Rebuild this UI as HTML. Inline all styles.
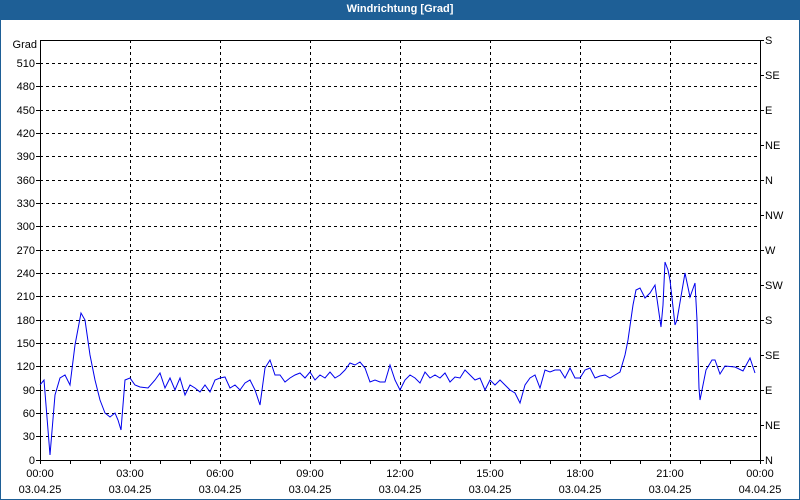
<!DOCTYPE html>
<html><head><style>
html,body{margin:0;padding:0;width:800px;height:500px;overflow:hidden;background:#fff}
.frame{position:absolute;left:0;top:0;width:798px;height:498px;border:1px solid #1e5f96}
.title{position:absolute;left:0;top:0;width:800px;height:20px;background:#1e5f96;color:#fff;font:bold 11px "Liberation Sans",sans-serif;text-align:center;line-height:19px}
svg{position:absolute;left:0;top:0}
text{font-family:"Liberation Sans",sans-serif;font-size:11px;fill:#000}
</style></head><body>
<div class="frame"></div>
<div class="title">Windrichtung [Grad]</div>
<svg width="800" height="500">
<g stroke="#000" stroke-width="1" stroke-dasharray="3,3" shape-rendering="crispEdges">
<line x1="40" x2="760" y1="63.5" y2="63.5"/><line x1="40" x2="760" y1="86.5" y2="86.5"/><line x1="40" x2="760" y1="110.5" y2="110.5"/><line x1="40" x2="760" y1="133.5" y2="133.5"/><line x1="40" x2="760" y1="156.5" y2="156.5"/><line x1="40" x2="760" y1="180.5" y2="180.5"/><line x1="40" x2="760" y1="203.5" y2="203.5"/><line x1="40" x2="760" y1="226.5" y2="226.5"/><line x1="40" x2="760" y1="250.5" y2="250.5"/><line x1="40" x2="760" y1="273.5" y2="273.5"/><line x1="40" x2="760" y1="296.5" y2="296.5"/><line x1="40" x2="760" y1="320.5" y2="320.5"/><line x1="40" x2="760" y1="343.5" y2="343.5"/><line x1="40" x2="760" y1="366.5" y2="366.5"/><line x1="40" x2="760" y1="390.5" y2="390.5"/><line x1="40" x2="760" y1="413.5" y2="413.5"/><line x1="40" x2="760" y1="436.5" y2="436.5"/>
<line y1="40" y2="460" x1="130.5" x2="130.5"/><line y1="40" y2="460" x1="220.5" x2="220.5"/><line y1="40" y2="460" x1="310.5" x2="310.5"/><line y1="40" y2="460" x1="400.5" x2="400.5"/><line y1="40" y2="460" x1="490.5" x2="490.5"/><line y1="40" y2="460" x1="580.5" x2="580.5"/><line y1="40" y2="460" x1="670.5" x2="670.5"/>
</g>
<g stroke="#000" stroke-width="1" shape-rendering="crispEdges">
<line x1="40.5" y1="40" x2="40.5" y2="460"/><line x1="760.5" y1="40" x2="760.5" y2="460"/><line x1="40" y1="40.5" x2="761" y2="40.5"/><line x1="40" y1="460.5" x2="761" y2="460.5"/>
<path d="M70.5 460v4M100.5 460v4M130.5 460v4M160.5 460v4M190.5 460v4M220.5 460v4M250.5 460v4M280.5 460v4M310.5 460v4M340.5 460v4M370.5 460v4M400.5 460v4M430.5 460v4M460.5 460v4M490.5 460v4M520.5 460v4M550.5 460v4M580.5 460v4M610.5 460v4M640.5 460v4M670.5 460v4M700.5 460v4M730.5 460v4M760.5 460v4M40.5 460v4"/>
<path d="M36 63.5h4M36 86.5h4M36 110.5h4M36 133.5h4M36 156.5h4M36 180.5h4M36 203.5h4M36 226.5h4M36 250.5h4M36 273.5h4M36 296.5h4M36 320.5h4M36 343.5h4M36 366.5h4M36 390.5h4M36 413.5h4M36 436.5h4M36 460.5h4"/>
<path d="M760 40.5h4M760 75.5h4M760 110.5h4M760 145.5h4M760 180.5h4M760 215.5h4M760 250.5h4M760 285.5h4M760 320.5h4M760 355.5h4M760 390.5h4M760 425.5h4M760 460.5h4"/>
</g>
<g text-anchor="end">
<text x="37" y="48">Grad</text>
<text x="35" y="67">510</text><text x="35" y="90">480</text><text x="35" y="114">450</text><text x="35" y="137">420</text><text x="35" y="160">390</text><text x="35" y="184">360</text><text x="35" y="207">330</text><text x="35" y="230">300</text><text x="35" y="254">270</text><text x="35" y="277">240</text><text x="35" y="300">210</text><text x="35" y="324">180</text><text x="35" y="347">150</text><text x="35" y="370">120</text><text x="35" y="394">90</text><text x="35" y="417">60</text><text x="35" y="440">30</text><text x="35" y="464">0</text>
</g>
<g>
<text x="765" y="44">S</text><text x="765" y="79">SE</text><text x="765" y="114">E</text><text x="765" y="149">NE</text><text x="765" y="184">N</text><text x="765" y="219">NW</text><text x="765" y="254">W</text><text x="765" y="289">SW</text><text x="765" y="324">S</text><text x="765" y="359">SE</text><text x="765" y="394">E</text><text x="765" y="429">NE</text><text x="765" y="464">N</text>
</g>
<g text-anchor="middle">
<text x="40" y="477">00:00</text><text x="130" y="477">03:00</text><text x="220" y="477">06:00</text><text x="310" y="477">09:00</text><text x="400" y="477">12:00</text><text x="490" y="477">15:00</text><text x="580" y="477">18:00</text><text x="670" y="477">21:00</text><text x="760" y="477">00:00</text>
<text x="40" y="493">03.04.25</text><text x="130" y="493">03.04.25</text><text x="220" y="493">03.04.25</text><text x="310" y="493">03.04.25</text><text x="400" y="493">03.04.25</text><text x="490" y="493">03.04.25</text><text x="580" y="493">03.04.25</text><text x="670" y="493">03.04.25</text><text x="760" y="493">04.04.25</text>
</g>
<polyline fill="none" stroke="#0000ee" stroke-width="1" points="40,385 44,380 50,455 55,395 60,378 65,375 70,385 75,345 81,313 85,320 90,355 95,380 100,400 105,413 110,417 115,413 118,420 121,430 125,380 130,378 135,385 140,387 148,388 155,380 160,373 165,388 170,378 175,390 180,378 185,395 190,385 195,388 200,392 205,385 210,392 215,380 220,378 225,377 230,388 235,385 240,390 245,383 250,380 255,390 260,405 265,368 270,360 275,375 280,375 285,382 290,378 295,375 300,373 305,378 310,372 315,380 320,375 325,378 330,372 335,378 340,375 345,370 350,363 355,365 360,362 365,368 370,382 375,380 380,382 385,382 390,365 395,380 400,390 405,380 410,375 415,378 420,383 425,372 430,378 435,375 440,378 445,373 450,382 455,377 460,378 465,370 470,375 475,380 480,378 485,390 490,380 495,385 500,380 505,385 510,390 515,393 520,403 525,385 530,378 535,375 540,388 545,370 550,372 555,370 560,370 565,378 570,368 575,378 580,378 585,370 590,368 595,378 600,376 605,375 610,378 615,375 620,372 625,355 628,340 633,305 636,290 640,288 645,298 650,293 655,285 660,320 661,327 663,305 665,262 668,270 670,280 675,325 677,320 685,273 690,297 695,283 697,320 699,388 700,400 702,390 706,370 712,360 715,360 720,374 725,366 735,367 743,371 750,358 755,373"/>
</svg>
</body></html>
